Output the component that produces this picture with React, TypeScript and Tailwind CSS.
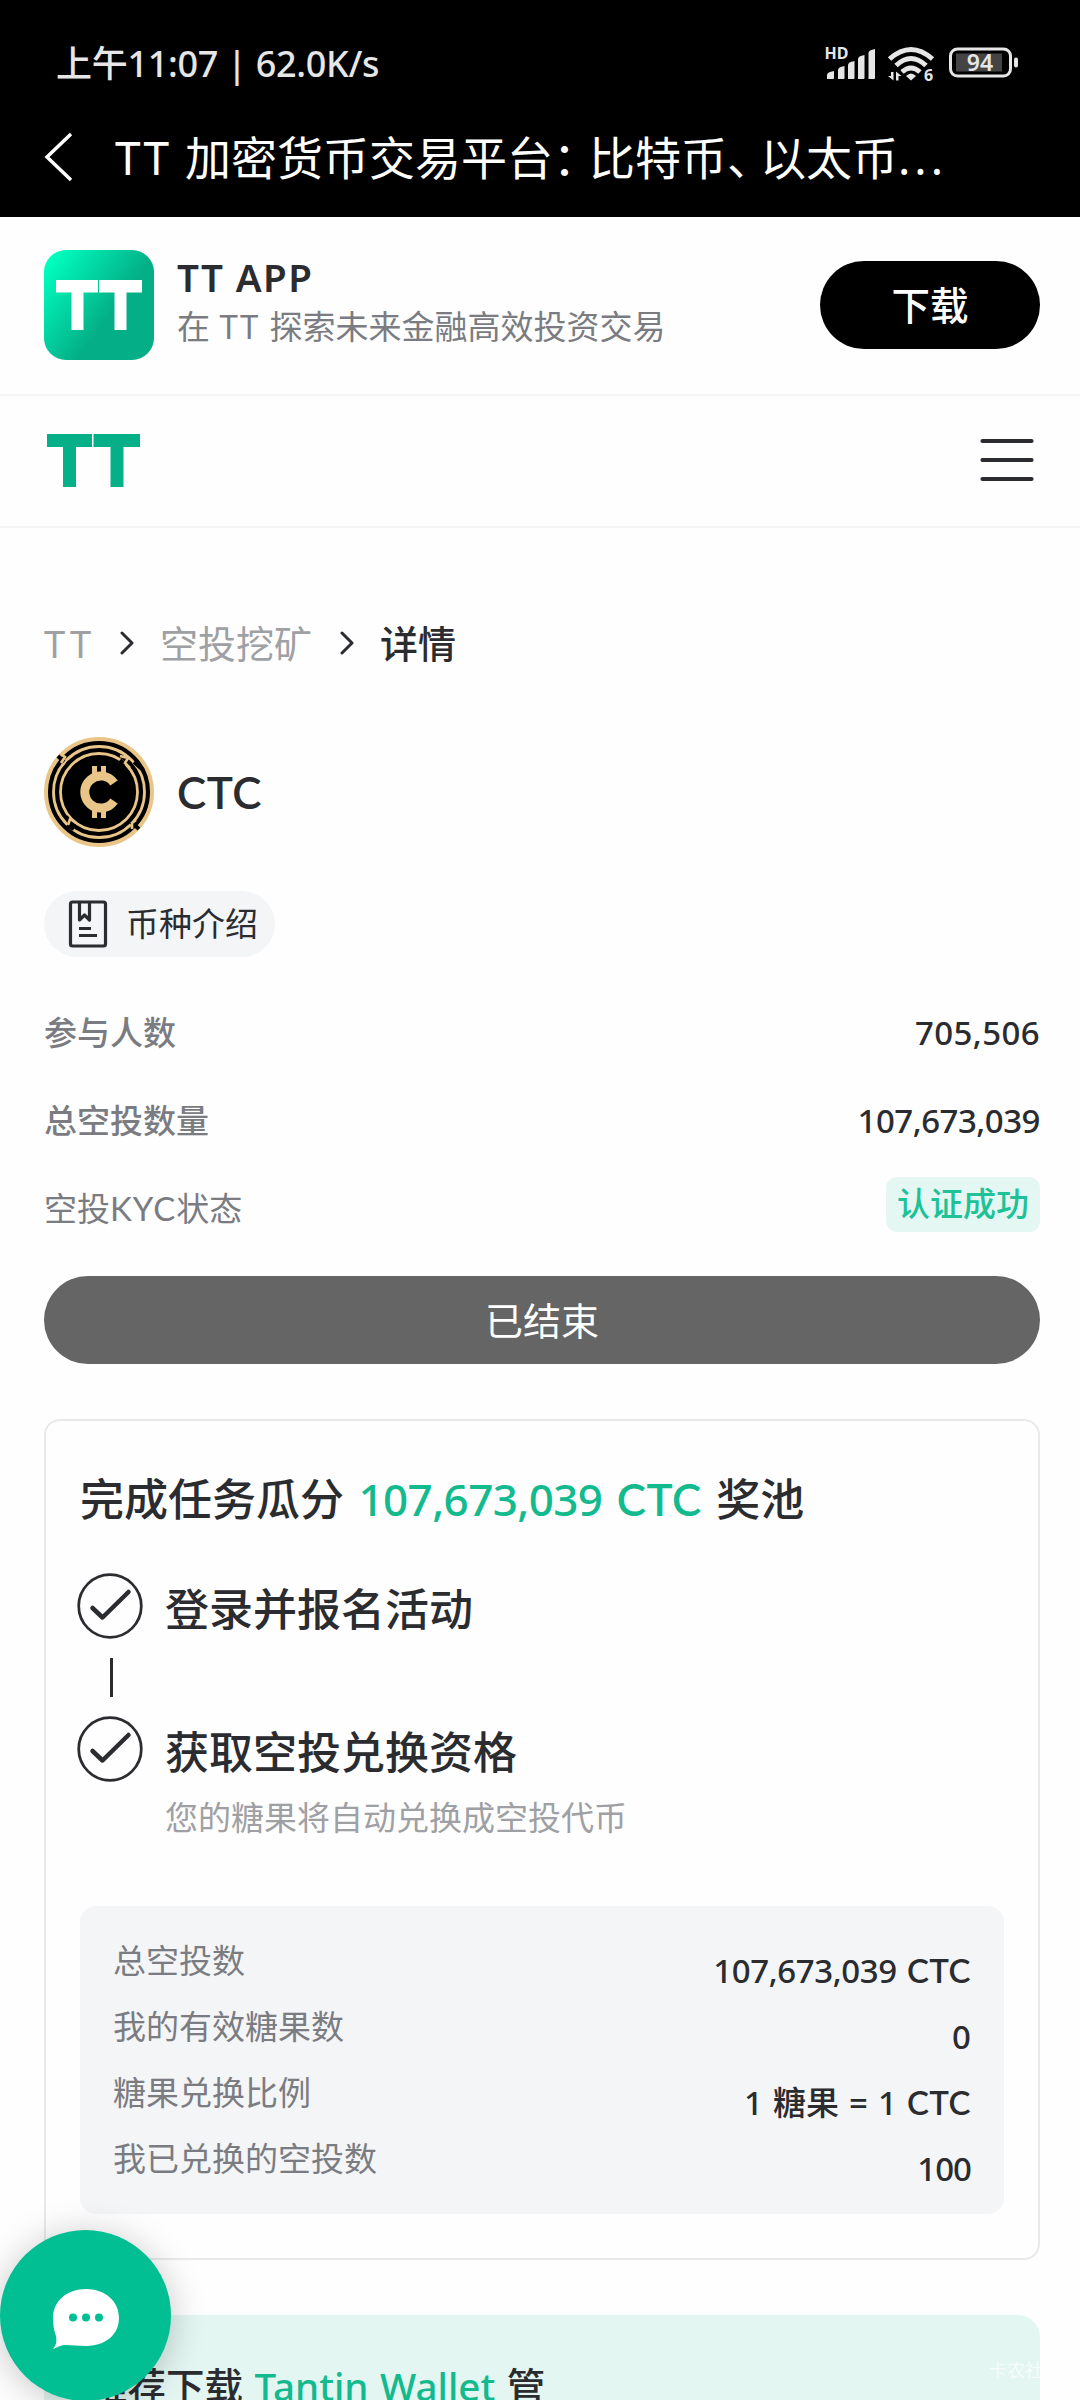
import type { ReactNode } from 'react'

const stats = [
  { label: '参与人数', value: '705,506', tracking: 'tracking-[0.4px]' },
  { label: '总空投数量', value: '107,673,039', tracking: 'tracking-[-0.5px]' },
]

const rewards = [
  { label: '总空投数', value: '107,673,039', unit: 'CTC', tracking: 'tracking-[-0.4px]' },
  { label: '我的有效糖果数', value: '0', tracking: 'tracking-normal' },
  { label: '糖果兑换比例', value: '1 糖果 = 1', unit: 'CTC', tracking: 'tracking-normal' },
  { label: '我已兑换的空投数', value: '100', tracking: 'tracking-[-1px]' },
]

function Ticker({ children }: { children: ReactNode }) {
  return <span className="font-['Lato','Noto_Sans',sans-serif] font-semibold tracking-[0.5px] leading-none">{children}</span>
}

function StatusIcons() {
  return (
    <svg className="w-[196px] h-[42px]" viewBox="824 44 196 42" fill="#e6e6e6">
      <text x="824.5" y="60" fontSize="16" fontWeight="700" fontFamily="Noto Sans, sans-serif" textLength="24">HD</text>
      <path d="M827 80v-4q0-3 7-4v7q0 1-1 1zM838 80V71q0-3 6.500-4v12q0 1-1 1zM848 80V66q0-3 6.500-4v17q0 1-1 1zM858 80V60q0-3 6.500-4v23q0 1-1 1zM868.500 80V54q0-3 6.500-4v29q0 1-1 1z" />
      <g fill="none" stroke="#e6e6e6" strokeWidth="5">
        <path d="M889.500 60q21.500-19 43 0" />
        <path d="M896 66.500q15-14 30 0" />
        <path d="M902 73q9-8 18 0" />
      </g>
      <path d="M906 77q5-5 10 0l-5 4.500z" />
      <path d="M888 77h3v-4h2.500v8.500zM896 81.500v-9l5.500 4.500h-3v4.500z" />
      <text x="924" y="81.500" fontSize="16" fontWeight="700" fontFamily="Noto Sans, sans-serif">6</text>
      <rect x="950.500" y="50" width="60" height="27" rx="7" fill="none" stroke="#e6e6e6" strokeWidth="3" />
      <rect x="956" y="54.500" width="46" height="18" fill="#444" />
      <rect x="1014" y="58.500" width="4" height="10" rx="2" />
      <text x="980" y="72" fontSize="23" fontWeight="600" textAnchor="middle" fontFamily="Noto Sans, sans-serif">94</text>
    </svg>
  )
}

function CoinIcon() {
  return (
    <svg className="size-[110px]" viewBox="0 0 110 110" fill="none" stroke="#e9c687">
      <circle cx="55" cy="55" r="53" fill="#000" strokeWidth="4" />
      <circle cx="55" cy="55" r="45.500" strokeWidth="2.800" />
      <circle cx="55" cy="55" r="38.500" strokeWidth="2.800" />
      {/* breaks in the rings, each closed by a short step */}
      <path d="M14 19l6 6M81 28l-5-5M99 33l-9-8M95 92l-8-7M22 80l7 7M30 92l-7-4" stroke="#000" strokeWidth="4" />
      <path d="M17 26l4-6-4-3M76 19l8 2-3 5 5 5M24 88l2-6 6 4M88 92v-6l4-3" strokeWidth="2.600" />
      <path d="M70 46A16 16 0 1 0 70 64" strokeWidth="9" />
      <path d="M50.500 29v10M59.500 29v10M50.500 71v10M59.500 71v10" strokeWidth="5" />
    </svg>
  )
}

function Chevron() {
  return (
    <svg className="w-[14px] h-[26px]" viewBox="0 0 14 26" fill="none" stroke="#2b2c30" strokeWidth="3" strokeLinecap="round" strokeLinejoin="round">
      <path d="M2 3l10 10L2 23" />
    </svg>
  )
}

function StepCheck() {
  return (
    <svg className="size-[66px]" viewBox="0 0 66 66" fill="none" stroke="#2b2c30">
      <circle cx="33" cy="33" r="31.300" strokeWidth="2.750" />
      <path d="M15.500 35l10 9.500 26-25.500" strokeWidth="4.500" strokeLinecap="round" strokeLinejoin="round" />
    </svg>
  )
}

export default function App() {
  return (
    <div className="w-[1080px] h-[2400px] overflow-hidden relative bg-[#fefefe] text-[#2b2c30] text-[33px] leading-[44px] whitespace-nowrap font-['Noto_Sans','Noto_Sans_CJK_SC',sans-serif]">
      <header className="h-[217px] bg-black text-white">
        <div className="h-[128px] pl-[56px] pr-[60px] flex items-center justify-between text-[#e6e6e6]">
          <div className="text-[36px] font-medium tracking-[-0.3px]">上午11:07 | 62.0K/s</div>
          <StatusIcons />
        </div>
        <div className="h-[58px] pl-[44px] flex items-center">
          <svg className="w-[30px] h-[50px]" viewBox="0 0 30 50" fill="none" stroke="#fff" strokeWidth="3.500">
            <path d="M27 2L3 25l24 23" />
          </svg>
          <h1 className="ml-[41px] text-[46px]">
            <span className="tracking-[2px]">TT </span>加密货币交易平台<span className="tracking-[-10px]">：</span>比特币<span className="tracking-[-13px]">、</span>以太币<span className="tracking-[4px]">...</span>
          </h1>
        </div>
      </header>

      <section className="h-[179px] pl-[44px] pr-[40px] pb-0.5 border-b-2 border-[#f5f5f6] flex items-center justify-between">
        <div className="flex items-center">
          <svg className="size-[110px]" viewBox="0 0 110 110">
            <defs>
              <linearGradient id="appIcon" x1="0" y1="0.15" x2="0.6" y2="0.6">
                <stop offset="0" stopColor="#00ffc0" />
                <stop offset="1" stopColor="#04ae86" />
              </linearGradient>
            </defs>
            <rect width="110" height="110" rx="22" fill="url(#appIcon)" />
            <path d="M12 30h42v12.500H39.500V80h-12V42.500H12zM55 30h43v12.500H82.500V80h-12V42.500H55z" fill="#fff" />
          </svg>
          <div className="ml-[23px] pb-[6px]">
            <div className="mb-[6px] text-[38.5px] font-semibold tracking-[1.4px]">TT APP</div>
            <div className="text-[#7a7c82] [word-spacing:1px]">在 <span className="tracking-[1.5px]">TT</span> 探索未来金融高效投资交易</div>
          </div>
        </div>
        <button className="w-[220px] h-[88px] rounded-full bg-black text-white text-[38.5px] font-medium">下载</button>
      </section>

      <nav className="h-[132px] pl-[47px] pr-[46px] pb-0.5 border-b-2 border-[#f5f5f6] flex items-center justify-between">
        <svg className="w-[93px] h-[53px]" viewBox="0 0 93 53" fill="#05af87">
          <path d="M0 0h45v13H29v40H16V13H0zM46.500 0H93v13H76.500v40h-13V13h-17z" />
        </svg>
        <svg className="w-[54px] h-[44px]" viewBox="0 0 54 44" stroke="#2b2c30" strokeWidth="4.200" strokeLinecap="round">
          <path d="M2.500 3h49M2.500 22h49M2.500 41h49" />
        </svg>
      </nav>

      <main className="pl-[44px] pr-[40px]">
        <div className="mt-[88px] h-[54px] flex items-center text-[38px] text-[#9fa0a3]">
          <span className="w-[76px] tracking-[4px]">TT</span>
          <Chevron />
          <span className="ml-[26px] w-[180px]">空投挖矿</span>
          <Chevron />
          <span className="ml-[26px] text-[#2b2c30] font-medium">详情</span>
        </div>

        <div className="mt-[67px] flex items-center">
          <CoinIcon />
          <span className="ml-[23px] text-[44px]"><Ticker>CTC</Ticker></span>
        </div>

        <div className="mt-[44px] w-[231px] h-[66px] rounded-full bg-[#f4f5f7] flex items-center">
          <svg className="ml-[24px] w-[40px] h-[48px]" viewBox="0 0 40 48" fill="none" stroke="#2b2c30" strokeWidth="3.200" strokeLinejoin="round">
            <rect x="2.500" y="2" width="35" height="44" rx="2" />
            <path d="M11.500 2v18l5-5 5 5V2M11 28.500h12M11 35.500h18" />
          </svg>
          <span className="ml-[18px]">币种介绍</span>
        </div>

        <div className="mt-[32px] text-[#7a7c82]">
          {stats.map((s) => (
            <div key={s.label} className="h-[88px] flex items-center justify-between font-medium">
              <span>{s.label}</span>
              <span className={`text-[#2b2c30] ${s.tracking}`}>{s.value}</span>
            </div>
          ))}
          <div className="h-[88px] flex items-center justify-between">
            <span>空投<span className="font-['Lato','Noto_Sans',sans-serif] leading-none tracking-[1px]">KYC</span>状态</span>
            <span className="h-[55px] w-[154px] mb-[9px] pb-0.5 rounded-[11px] bg-[#e5f7f3] text-[#1fc197] font-medium flex items-center justify-center">认证成功</span>
          </div>
        </div>

        <button className="mt-[23px] w-full h-[88px] rounded-full bg-[#656565] text-white text-[38px]">已结束</button>

        <section className="mt-[55px] h-[841px] rounded-[16px] border-[2.5px] border-[#e9e9ea] px-[34px] pt-[50px]">
          <h2 className="h-[56px] leading-[56px] text-[44px] font-medium [word-spacing:3px]">
            完成任务瓜分 <span className="text-[#12ba8e]"><span className="tracking-[-0.6px]">107,673,039</span> <Ticker>CTC</Ticker></span> 奖池
          </h2>
          <div className="mt-[46px] -ml-[3px] flex">
            <StepCheck />
            <span className="ml-[22px] mt-[8px] text-[44px] leading-[56px] font-medium">登录并报名活动</span>
          </div>
          <div className="ml-[30px] my-[19px] w-[3px] h-[39px] bg-[#2b2c30]" />
          <div className="-ml-[3px] flex">
            <StepCheck />
            <div className="ml-[22px] mt-[8px]">
              <div className="text-[44px] leading-[56px] font-medium">获取空投兑换资格</div>
              <div className="mt-[16px] text-[#9fa0a3]">您的糖果将自动兑换成空投代币</div>
            </div>
          </div>
          <div className="mt-[66px] h-[308px] rounded-[16px] bg-[#f4f5f7] px-[33px] pt-[22px]">
            {rewards.map((r) => (
              <div key={r.label} className="h-[66px] flex items-center justify-between">
                <span className="text-[#7a7c82]">{r.label}</span>
                <span className="mt-[20px] font-medium [word-spacing:1.5px]">
                  <span className={r.tracking}>{r.value}</span>
                  {r.unit && <> <Ticker>{r.unit}</Ticker></>}
                </span>
              </div>
            ))}
          </div>
        </section>

        <section className="mt-[55px] h-[200px] rounded-[22px] bg-[#e3f6f1] pt-[44px] pl-[45px] overflow-hidden flex justify-between">
          <div className="text-[38.5px] leading-[54px] font-medium [word-spacing:1.5px]">
            推荐下载 <span className="text-[#12ba8e]">Tantin Wallet</span> 管
          </div>
          <span className="w-[51px] text-[18px] leading-[22px] text-white/70 overflow-hidden">卡农社区</span>
        </section>
      </main>

      {/* floating chat button */}
      <button className="absolute left-0 top-[2230px] size-[171px] pt-[6px] rounded-full bg-[#02bf93] shadow-[0_4px_36px_rgba(0,0,0,0.22)] flex items-center justify-center">
        <svg className="w-[68px] h-[60px]" viewBox="0 0 68 60">
          <path d="M34 0C53 0 67 12 67 29S53 57 34 57c-8 0-14-1-20-1-5 0-8 2-13 4 3-4 4-7 3-13C2 42 1 36 1 29 1 12 15 0 34 0z" fill="#fff" />
          <g fill="#02bf93">
            <circle cx="21" cy="28.500" r="4" />
            <circle cx="34" cy="28.500" r="4" />
            <circle cx="47" cy="28.500" r="4" />
          </g>
        </svg>
      </button>
    </div>
  )
}
